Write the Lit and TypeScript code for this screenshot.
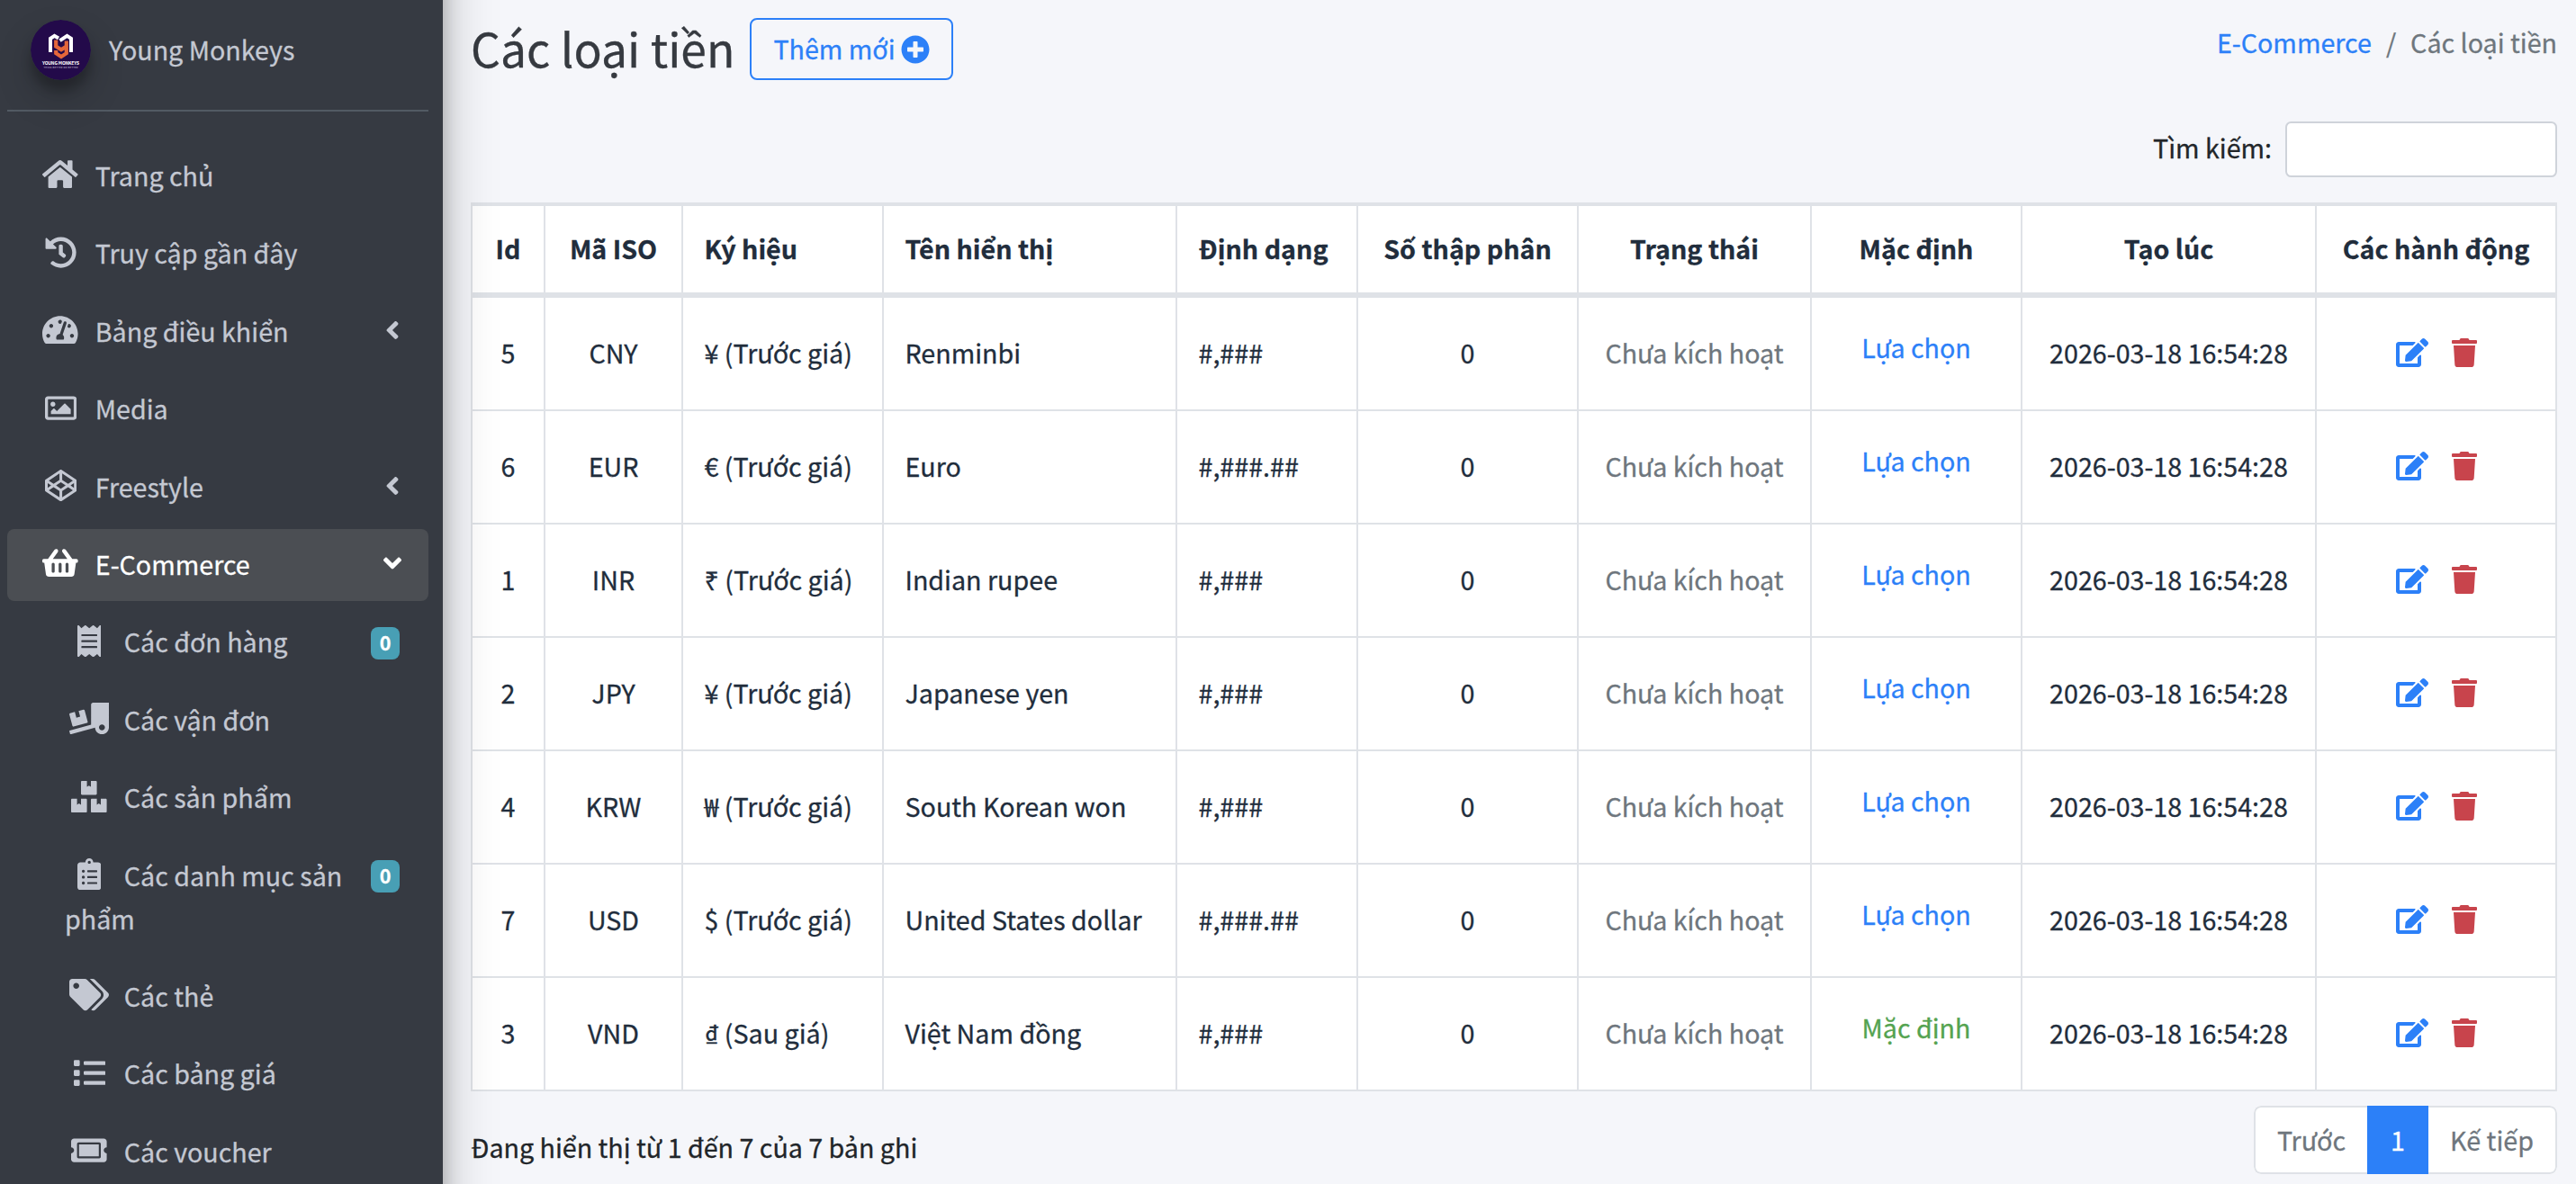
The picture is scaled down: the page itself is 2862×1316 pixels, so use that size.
import { LitElement, html, css, svg } from "lit";
import { customElement, property } from "lit/decorators.js";

interface Icon { w: number; d: string }

const ICONS: Record<string, Icon> = {
  home: { w: 576, d: "M280.37 148.26L96 300.11V464a16 16 0 0 0 16 16l112.06-.29a16 16 0 0 0 15.92-16V368a16 16 0 0 1 16-16h64a16 16 0 0 1 16 16v95.64a16 16 0 0 0 16 16.05L464 480a16 16 0 0 0 16-16V300L295.67 148.26a12.19 12.19 0 0 0-15.3 0zM571.6 251.47L488 182.56V44.05a12 12 0 0 0-12-12h-56a12 12 0 0 0-12 12v72.61L318.47 43a48 48 0 0 0-61 0L4.34 251.47a12 12 0 0 0-1.6 16.9l25.5 31A12 12 0 0 0 45.15 301l235.22-193.74a12.19 12.19 0 0 1 15.3 0L530.9 301a12 12 0 0 0 16.9-1.6l25.5-31a12 12 0 0 0-1.7-16.93z" },
  history: { w: 512, d: "M504 255.531c.253 136.64-111.18 248.372-247.82 248.468-59.015.042-113.223-20.53-155.822-54.911-11.077-8.94-11.905-25.541-1.839-35.607l11.267-11.267c8.609-8.609 22.353-9.551 31.891-1.984C173.062 425.135 212.781 440 256 440c101.705 0 184-82.311 184-184 0-101.705-82.311-184-184-184-48.814 0-93.149 18.969-126.068 49.932l50.754 50.754c10.08 10.08 2.941 27.314-11.313 27.314H24c-8.837 0-16-7.163-16-16V38.627c0-14.254 17.234-21.393 27.314-11.314l49.372 49.372C129.209 34.136 189.552 8 256 8c136.81 0 247.747 110.78 248 247.531zm-180.912 78.784l9.823-12.63c8.138-10.463 6.253-25.542-4.21-33.679L288 256.349V152c0-13.255-10.745-24-24-24h-16c-13.255 0-24 10.745-24 24v135.651l65.409 50.874c10.463 8.137 25.541 6.253 33.679-4.21z" },
  gauge: { w: 576, d: "M288 32C128.94 32 0 160.94 0 320c0 52.8 14.25 102.26 39.06 144.8 5.61 9.62 16.3 15.2 27.44 15.2h443c11.14 0 21.83-5.58 27.44-15.2C561.75 422.26 576 372.8 576 320c0-159.06-128.94-288-288-288zm0 64c14.71 0 26.58 10.13 30.32 23.65-1.11 2.26-2.64 4.23-3.45 6.67l-9.22 27.67c-5.13 3.49-10.97 6.01-17.64 6.01-17.67 0-32-14.33-32-32S270.33 96 288 96zM96 384c-17.67 0-32-14.33-32-32s14.33-32 32-32 32 14.33 32 32-14.33 32-32 32zm48-160c-17.67 0-32-14.33-32-32s14.33-32 32-32 32 14.33 32 32-14.33 32-32 32zm246.77-72.41l-61.33 184C343.13 347.33 352 364.54 352 384c0 11.72-3.38 22.55-8.88 32H232.88c-5.5-9.45-8.88-20.28-8.88-32 0-33.94 26.5-61.43 59.9-63.59l61.34-184.01c4.17-12.56 17.73-19.45 30.36-15.17 12.57 4.19 19.35 17.79 15.17 30.36zm14.66 57.2l15.52-46.55c3.47-1.29 7.13-2.23 11.05-2.23 17.67 0 32 14.33 32 32s-14.33 32-32 32c-11.38-.01-20.89-6.28-26.57-15.22zM480 384c-17.67 0-32-14.33-32-32s14.33-32 32-32 32 14.33 32 32-14.33 32-32 32z" },
  image: { w: 512, d: "M464 64H48C21.49 64 0 85.49 0 112v288c0 26.51 21.49 48 48 48h416c26.51 0 48-21.49 48-48V112c0-26.51-21.49-48-48-48zm-6 336H54a6 6 0 0 1-6-6V118a6 6 0 0 1 6-6h404a6 6 0 0 1 6 6v276a6 6 0 0 1-6 6zM128 152c-22.091 0-40 17.909-40 40s17.909 40 40 40 40-17.909 40-40-17.909-40-40-40zM96 352h320v-80l-87.515-87.515c-4.686-4.686-12.284-4.686-16.971 0L192 304l-39.515-39.515c-4.686-4.686-12.284-4.686-16.971 0L96 304v48z" },
  codepen: { w: 512, d: "M502.285 159.704l-234-156c-7.987-4.915-16.511-4.96-24.571 0l-234 156C3.714 163.703 0 170.847 0 177.989v155.999c0 7.143 3.714 14.286 9.715 18.286l234 156.022c7.987 4.915 16.511 4.96 24.571 0l234-156.022c6-3.999 9.715-11.143 9.715-18.286V177.989c-.001-7.142-3.715-14.286-9.716-18.285zM278 63.131l172.286 114.858-76.857 51.429L278 165.703V63.131zm-44 0v102.572l-95.429 63.715-76.857-51.429L234 63.131zM44 219.132l55.143 36.857L44 292.847v-73.715zm190 229.715L61.714 333.989l76.857-51.429L234 346.275v102.572zm22-140.858l-77.715-52 77.715-52 77.715 52-77.715 52zm22 140.858V346.275l95.429-63.715 76.857 51.429L278 448.847zm190-156l-55.143-36.858L468 219.132v73.715z" },
  basket: { w: 576, d: "M576 216v16c0 13.255-10.745 24-24 24h-8l-26.113 182.788C514.509 462.435 494.257 480 470.37 480H105.63c-23.887 0-44.139-17.565-47.518-41.212L32 256h-8c-13.255 0-24-10.745-24-24v-16c0-13.255 10.745-24 24-24h67.341l106.78-146.821c10.395-14.292 30.407-17.453 44.701-7.058 14.293 10.395 17.453 30.408 7.058 44.701L170.477 192h235.046L326.12 82.821c-10.395-14.292-7.234-34.306 7.059-44.701 14.291-10.395 34.306-7.235 44.701 7.058L484.659 192H552c13.255 0 24 10.745 24 24zM312 392V280c0-13.255-10.745-24-24-24s-24 10.745-24 24v112c0 13.255 10.745 24 24 24s24-10.745 24-24zm112 0V280c0-13.255-10.745-24-24-24s-24 10.745-24 24v112c0 13.255 10.745 24 24 24s24-10.745 24-24zm-224 0V280c0-13.255-10.745-24-24-24s-24 10.745-24 24v112c0 13.255 10.745 24 24 24s24-10.745 24-24z" },
  receipt: { w: 384, d: "M358.4 3.2L320 48 265.6 3.2a15.9 15.9 0 0 0-19.2 0L192 48 137.6 3.2a15.9 15.9 0 0 0-19.2 0L64 48 25.6 3.2C15-4.7 0 2.8 0 16v480c0 13.2 15 20.7 25.6 12.8L64 464l54.4 44.8a15.9 15.9 0 0 0 19.2 0L192 464l54.4 44.8a15.9 15.9 0 0 0 19.2 0L320 464l38.4 44.8c10.5 7.9 25.6.4 25.6-12.8V16c0-13.2-15-20.7-25.6-12.8zM320 360c0 4.4-3.6 8-8 8H72c-4.4 0-8-3.6-8-8v-16c0-4.4 3.6-8 8-8h240c4.4 0 8 3.6 8 8v16zm0-96c0 4.4-3.6 8-8 8H72c-4.4 0-8-3.6-8-8v-16c0-4.4 3.6-8 8-8h240c4.4 0 8 3.6 8 8v16zm0-96c0 4.4-3.6 8-8 8H72c-4.4 0-8-3.6-8-8v-16c0-4.4 3.6-8 8-8h240c4.4 0 8 3.6 8 8v16z" },
  truck: { w: 640, d: "M50.2 375.6c2.3 8.5 11.1 13.6 19.6 11.3l216.4-58c8.5-2.3 13.6-11.1 11.3-19.6l-49.7-185.5c-2.3-8.5-11.1-13.6-19.6-11.3L151 133.3l24.8 92.7-61.8 16.5-24.8-92.7-77.3 20.7C3.4 172.8-1.7 181.6.6 190.1l49.6 185.5zM384 0c-17.7 0-32 14.3-32 32v323.6L5.9 450c-4.3 1.2-6.8 5.6-5.6 9.8l12.6 46.3c1.2 4.3 5.6 6.8 9.8 5.6l393.7-107.4C418.8 464.1 467.6 512 528 512c61.9 0 112-50.1 112-112V0H384zm144 448c-26.5 0-48-21.5-48-48s21.5-48 48-48 48 21.5 48 48-21.5 48-48 48z" },
  boxes: { w: 576, d: "M560 288h-80v96l-32-21.3-32 21.3v-96h-80c-8.8 0-16 7.2-16 16v192c0 8.8 7.2 16 16 16h224c8.8 0 16-7.2 16-16V304c0-8.8-7.2-16-16-16zm-384-64h224c8.8 0 16-7.2 16-16V16c0-8.8-7.2-16-16-16h-80v96l-32-21.3L256 96V0h-80c-8.8 0-16 7.2-16 16v192c0 8.8 7.2 16 16 16zm64 64h-80v96l-32-21.3L96 384v-96H16c-8.8 0-16 7.2-16 16v192c0 8.8 7.2 16 16 16h224c8.8 0 16-7.2 16-16V304c0-8.8-7.2-16-16-16z" },
  clipboard: { w: 384, d: "M336 64h-80c0-35.3-28.7-64-64-64s-64 28.7-64 64H48C21.5 64 0 85.5 0 112v352c0 26.5 21.5 48 48 48h288c26.5 0 48-21.5 48-48V112c0-26.5-21.5-48-48-48zM96 424c-13.3 0-24-10.7-24-24s10.7-24 24-24 24 10.7 24 24-10.7 24-24 24zm0-96c-13.3 0-24-10.7-24-24s10.7-24 24-24 24 10.7 24 24-10.7 24-24 24zm0-96c-13.3 0-24-10.7-24-24s10.7-24 24-24 24 10.7 24 24-10.7 24-24 24zm96-192c13.3 0 24 10.7 24 24s-10.7 24-24 24-24-10.7-24-24 10.7-24 24-24zm128 368c0 4.4-3.6 8-8 8H168c-4.4 0-8-3.6-8-8v-16c0-4.4 3.6-8 8-8h144c4.4 0 8 3.6 8 8v16zm0-96c0 4.4-3.6 8-8 8H168c-4.4 0-8-3.6-8-8v-16c0-4.4 3.6-8 8-8h144c4.4 0 8 3.6 8 8v16zm0-96c0 4.4-3.6 8-8 8H168c-4.4 0-8-3.6-8-8v-16c0-4.4 3.6-8 8-8h144c4.4 0 8 3.6 8 8v16z" },
  tags: { w: 640, d: "M497.941 225.941L286.059 14.059A48 48 0 0 0 252.118 0H48C21.49 0 0 21.49 0 48v204.118a48 48 0 0 0 14.059 33.941l211.882 211.882c18.744 18.745 49.136 18.746 67.882 0l204.118-204.118c18.745-18.745 18.745-49.137 0-67.882zM112 160c-26.51 0-48-21.49-48-48s21.49-48 48-48 48 21.49 48 48-21.49 48-48 48zm513.941 133.823L421.823 497.941c-18.745 18.745-49.137 18.745-67.882 0l-.36-.36L527.64 323.522c16.999-16.999 26.36-39.6 26.36-63.64s-9.362-46.641-26.36-63.64L331.397 0h48.721a48 48 0 0 1 33.941 14.059l211.882 211.882c18.745 18.745 18.745 49.137 0 67.882z" },
  list: { w: 512, d: "M80 368H16a16 16 0 0 0-16 16v64a16 16 0 0 0 16 16h64a16 16 0 0 0 16-16v-64a16 16 0 0 0-16-16zm0-320H16A16 16 0 0 0 0 64v64a16 16 0 0 0 16 16h64a16 16 0 0 0 16-16V64a16 16 0 0 0-16-16zm0 160H16a16 16 0 0 0-16 16v64a16 16 0 0 0 16 16h64a16 16 0 0 0 16-16v-64a16 16 0 0 0-16-16zm416 176H176a16 16 0 0 0-16 16v32a16 16 0 0 0 16 16h320a16 16 0 0 0 16-16v-32a16 16 0 0 0-16-16zm0-320H176a16 16 0 0 0-16 16v32a16 16 0 0 0 16 16h320a16 16 0 0 0 16-16V80a16 16 0 0 0-16-16zm0 160H176a16 16 0 0 0-16 16v32a16 16 0 0 0 16 16h320a16 16 0 0 0 16-16v-32a16 16 0 0 0-16-16z" },
  ticket: { w: 576, d: "M128 160h320v192H128V160zm400 96c0 26.51 21.49 48 48 48v96c0 26.51-21.49 48-48 48H48c-26.51 0-48-21.49-48-48v-96c26.51 0 48-21.49 48-48s-21.49-48-48-48v-96c0-26.51 21.49-48 48-48h480c26.51 0 48 21.49 48 48v96c-26.51 0-48 21.49-48 48zm-48-104c0-13.255-10.745-24-24-24H120c-13.255 0-24 10.745-24 24v208c0 13.255 10.745 24 24 24h336c13.255 0 24-10.745 24-24V152z" },
  plus: { w: 512, d: "M256 8C119 8 8 119 8 256s111 248 248 248 248-111 248-248S393 8 256 8zm144 276c0 6.6-5.4 12-12 12h-92v92c0 6.6-5.4 12-12 12h-56c-6.6 0-12-5.4-12-12v-92h-92c-6.6 0-12-5.4-12-12v-56c0-6.6 5.4-12 12-12h92v-92c0-6.6 5.4-12 12-12h56c6.6 0 12 5.4 12 12v92h92c6.6 0 12 5.4 12 12v56z" },
  edit: { w: 576, d: "M402.6 83.2l90.2 90.2c3.8 3.8 3.8 10 0 13.8L274.4 405.6l-92.8 10.3c-12.4 1.4-22.9-9.1-21.5-21.5l10.3-92.8L388.8 83.2c3.8-3.8 10-3.8 13.8 0zm162-22.9l-48.8-48.8c-15.2-15.2-39.9-15.2-55.2 0l-35.4 35.4c-3.8 3.8-3.8 10 0 13.8l90.2 90.2c3.8 3.8 10 3.8 13.8 0l35.4-35.4c15.2-15.3 15.2-40 0-55.2zM384 346.2V448H64V128h229.8c3.2 0 6.2-1.3 8.5-3.5l40-40c7.6-7.6 2.1-20.5-8.5-20.5H48C21.5 64 0 85.5 0 112v352c0 26.5 21.5 48 48 48h352c26.5 0 48-21.5 48-48V306.2c0-10.7-12.9-16-20.5-8.5l-40 40c-2.2 2.3-3.5 5.3-3.5 8.5z" },
  trash: { w: 448, d: "M432 32H312l-9.4-18.7A24 24 0 0 0 281.1 0H166.8a23.72 23.72 0 0 0-21.4 13.3L136 32H16A16 16 0 0 0 0 48v32a16 16 0 0 0 16 16h416a16 16 0 0 0 16-16V48a16 16 0 0 0-16-16zM53.2 467a48 48 0 0 0 47.9 45h245.8a48 48 0 0 0 47.9-45L416 128H32z" },
  angle: { w: 256, d: "M31.7 239l136-136c9.4-9.4 24.6-9.4 33.9 0l22.6 22.6c9.4 9.4 9.4 24.6 0 33.9L127.9 256l96.4 96.4c9.4 9.4 9.4 24.6 0 33.9L201.7 409c-9.4 9.4-24.6 9.4-33.9 0l-136-136c-9.5-9.4-9.5-24.6-.1-34z" },
};

@customElement("fa-icon")
class FaIcon extends LitElement {
  @property() name = "home";

  static styles = css`
    :host { display: inline-flex; height: 1em; }
    .glyph { display: block; height: 1em; width: auto; fill: currentColor; }
  `;

  render() {
    const i = ICONS[this.name];
    return html`<svg class="glyph" viewBox="0 0 ${i.w} 512">${svg`<path d=${i.d}></path>`}</svg>`;
  }
}

interface NavEntry { icon: string; label: string; arrow?: boolean; open?: boolean; sub?: boolean; badge?: string }

const NAV: NavEntry[] = [
  { icon: "home", label: "Trang chủ" },
  { icon: "history", label: "Truy cập gần đây" },
  { icon: "gauge", label: "Bảng điều khiển", arrow: true },
  { icon: "image", label: "Media" },
  { icon: "codepen", label: "Freestyle", arrow: true },
  { icon: "basket", label: "E-Commerce", arrow: true, open: true },
  { icon: "receipt", label: "Các đơn hàng", sub: true, badge: "0" },
  { icon: "truck", label: "Các vận đơn", sub: true },
  { icon: "boxes", label: "Các sản phẩm", sub: true },
  { icon: "clipboard", label: "Các danh mục sản phẩm", sub: true, badge: "0" },
  { icon: "tags", label: "Các thẻ", sub: true },
  { icon: "list", label: "Các bảng giá", sub: true },
  { icon: "ticket", label: "Các voucher", sub: true },
];

@customElement("app-sidebar")
class AppSidebar extends LitElement {
  /* The box reaches past the window's top and bottom so that its shadow stays even along the whole edge. */
  static styles = css`
    :host {
      display: block; flex: none; width: 492px; height: 1316px; position: relative; z-index: 2;
      margin: -100px 0; padding: 100px 0;
      background: #363a42; color: #c4c8d2;
      box-shadow: 0 28px 56px rgba(0, 0, 0, 0.25), 0 20px 20px rgba(0, 0, 0, 0.22);
    }
    .inner { height: 100%; overflow: hidden; padding: 0 16px 0 8px; box-sizing: border-box; }
    .brand { display: flex; align-items: flex-start; height: 100px; border-bottom: 2px solid #525a63; padding: 22px 0 0 26px; }
    .logo { width: 67px; height: 67px; border-radius: 50%; display: block; box-shadow: 0 20px 40px rgba(0, 0, 0, 0.19), 0 12px 12px rgba(0, 0, 0, 0.23); }
    .brand-name { line-height: 48px; margin: 9px 0 0 20px; }
    .menu { padding-top: 32px; display: flex; flex-direction: column; gap: 6.4px; }
    .item { position: relative; padding: 15px 32px 17px; min-height: 48px; line-height: 48px; border-radius: 8px; }
    .item.sub { padding-left: 64px; }
    .item.sub .text { display: block; width: 352px; }
    .item.open { background: #4b4e53; color: #fff; }
    .icon { display: inline-flex; justify-content: center; width: 51.2px; margin: 0 13px 0 1.6px; font-size: 35.2px; line-height: 0; vertical-align: -4.6px; }
    .arrow { position: absolute; right: 32px; top: 22.4px; font-size: 32px; line-height: 0; }
    .open .arrow { transform: rotate(-90deg); }
    .badge {
      position: absolute; right: 32px; top: 22.4px; width: 32px; height: 36px; border-radius: 8px;
      background: #489fb5; color: #fff; font-weight: 700; font-size: 21.5px; line-height: 34px; text-align: center;
    }
  `;

  render() {
    return html`<div class="inner">
      <div class="brand">
        <svg class="logo" viewBox="0 0 67 67">
          <circle cx="33.5" cy="33.5" r="33.5" fill="#230a4a"></circle>
          <path d="M22 36V20.800l4.500-3 4.500 2.700M45 36V20.800l-4.500-3-8 5.400" fill="none" stroke="#fff" stroke-width="4"></path>
          <path d="M28.200 22.500v7l5.800 3.800 5.800-3.800v-6M39.800 29v8.200l-5.800 3.700-5.800-3.700v-3.200" fill="none" stroke="#e5673a" stroke-width="4.200"></path>
          <text x="33.5" y="49.500" text-anchor="middle" font-size="5" font-weight="700" textLength="41" fill="#fff">YOUNG MONKEYS</text>
          <text x="33.500" y="53.500" text-anchor="middle" font-size="2.600" textLength="38" fill="#cfc8dc">THINK BETTER DO BETTER</text>
        </svg>
        <span class="brand-name">Young Monkeys</span>
      </div>
      <nav class="menu">
        ${NAV.map((n) => html`<div class="item ${n.sub ? "sub" : ""} ${n.open ? "open" : ""}">
          <span class="text"><span class="icon"><fa-icon name=${n.icon}></fa-icon></span>${n.label}</span>
          ${n.arrow ? html`<fa-icon class="arrow" name="angle"></fa-icon>` : ""}
          ${n.badge ? html`<span class="badge">${n.badge}</span>` : ""}
        </div>`)}
      </nav>
    </div>`;
  }
}

const HEADERS = ["Id", "Mã ISO", "Ký hiệu", "Tên hiển thị", "Định dạng", "Số thập phân", "Trạng thái", "Mặc định", "Tạo lúc", "Các hành động"];
const ROWS: string[][] = [
  ["5", "CNY", "¥ (Trước giá)", "Renminbi", "#,###"],
  ["6", "EUR", "€ (Trước giá)", "Euro", "#,###.##"],
  ["1", "INR", "₹ (Trước giá)", "Indian rupee", "#,###"],
  ["2", "JPY", "¥ (Trước giá)", "Japanese yen", "#,###"],
  ["4", "KRW", "₩ (Trước giá)", "South Korean won", "#,###"],
  ["7", "USD", "$ (Trước giá)", "United States dollar", "#,###.##"],
  ["3", "VND", "₫ (Sau giá)", "Việt Nam đồng", "#,###"],
];

@customElement("currency-page")
class CurrencyPage extends LitElement {
  static styles = css`
    :host { display: block; flex: 1; min-width: 0; height: 1316px; overflow: hidden; background: #f5f6fa; color: #212529; }
    .page { padding: 20px 21px 0 31px; display: flex; flex-direction: column; }
    .head { display: flex; justify-content: space-between; height: 115px; }
    .title-box { display: flex; align-items: flex-start; gap: 17px; }
    .title { margin: 0; font-weight: 400; font-size: 51.6px; line-height: 65px; color: #363a40; }
    .add {
      box-sizing: border-box; height: 69px; padding: 0 24px; border: 2px solid #2c80f8; border-radius: 8px;
      display: flex; align-items: center; gap: 6px; color: #2c80f8; font-size: 32px;
    }
    .add-label { font-size: 28.65px; line-height: 48px; margin-top: -2px; }
    .crumbs { display: flex; line-height: 48px; margin-top: 3px; gap: 16px; color: #6e767d; }
    .link { color: #2c80f8; }
    .search { display: flex; justify-content: flex-end; align-items: flex-start; gap: 15px; height: 90px; }
    .search-label { line-height: 48px; margin-top: 5px; }
    .search-input { width: 302px; height: 62px; box-sizing: border-box; border: 2px solid #cfd3da; border-radius: 6.4px; background: #fff; }
    .table { width: 2318px; table-layout: fixed; border-collapse: separate; border-spacing: 0; background: #fff; border-left: 2px solid #dfe2e7; border-top: 4px solid #dfe2e7; color: #212d3c; }
    .c0 { width: 81px; } .c1 { width: 153px; } .c2 { width: 223px; } .c3 { width: 326px; } .c4 { width: 201px; }
    .c5 { width: 245px; } .c6 { width: 259px; } .c7 { width: 234px; } .c8 { width: 327px; } .c9 { width: 267px; }
    .cell { box-sizing: border-box; padding: 37px 0 0; border-right: 2px solid #dfe2e7; border-bottom: 2px solid #dfe2e7; height: 126px; line-height: 48px; text-align: center; white-space: nowrap; vertical-align: top; }
    .cell.left { text-align: left; padding-left: 23.5px; }
    .cell.th { height: 102px; border-bottom-width: 6px; font-weight: 700; padding-top: 23px; }
    .cell.raised { padding-top: 31px; }
    .muted { color: #6e767d; }
    .ok { color: #54a350; }
    .actions { display: flex; justify-content: center; gap: 26px; font-size: 32px; line-height: 0; padding-top: 8px; }
    .del { color: #c8444c; }
    .foot { display: flex; justify-content: space-between; padding-top: 16px; }
    .info { line-height: 48px; margin-top: 22px; }
    .pager { display: flex; box-sizing: border-box; height: 76px; background: #fff; border-radius: 8px; line-height: 72px; color: #6e767d; overflow: hidden; }
    .pg { box-sizing: border-box; border: 2px solid #dfe2e7; text-align: center; }
    .prev { width: 126px; border-right: 0; border-radius: 8px 0 0 8px; }
    .cur { width: 68px; background: #2c80f8; border-color: #2c80f8; color: #fff; }
    .next { width: 143px; border-left: 0; border-radius: 0 8px 8px 0; }
  `;

  private cls(i: number) { return i >= 2 && i <= 4 ? "left" : ""; }

  render() {
    return html`<div class="page">
      <header class="head">
        <div class="title-box">
          <h1 class="title">Các loại tiền</h1>
          <div class="add"><span class="add-label">Thêm mới</span><fa-icon name="plus"></fa-icon></div>
        </div>
        <div class="crumbs"><span class="link">E-Commerce</span><span>/</span><span>Các loại tiền</span></div>
      </header>
      <div class="search"><span class="search-label">Tìm kiếm:</span><div class="search-input"></div></div>
      <table class="table">
        <colgroup>${HEADERS.map((_, i) => html`<col class="c${i}">`)}</colgroup>
        <thead><tr>${HEADERS.map((h, i) => html`<th class="cell th ${this.cls(i)}">${h}</th>`)}</tr></thead>
        <tbody>
          ${ROWS.map((r) => html`<tr>
            ${r.map((c, i) => html`<td class="cell ${this.cls(i)}">${c}</td>`)}
            <td class="cell">0</td>
            <td class="cell muted">Chưa kích hoạt</td>
            <td class="cell raised">${r[1] === "VND" ? html`<span class="ok">Mặc định</span>` : html`<span class="link">Lựa chọn</span>`}</td>
            <td class="cell">2026-03-18 16:54:28</td>
            <td class="cell"><div class="actions"><fa-icon class="link" name="edit"></fa-icon><fa-icon class="del" name="trash"></fa-icon></div></td>
          </tr>`)}
        </tbody>
      </table>
      <footer class="foot">
        <span class="info">Đang hiển thị từ 1 đến 7 của 7 bản ghi</span>
        <div class="pager"><span class="pg prev">Trước</span><span class="pg cur">1</span><span class="pg next">Kế tiếp</span></div>
      </footer>
    </div>`;
  }
}

@customElement("app-root")
class AppRoot extends LitElement {
  static styles = css`
    :host {
      display: flex; align-items: flex-start; width: 2862px; height: 1316px; overflow: hidden;
      font-family: "Noto Sans CJK SC", "Noto Sans", sans-serif; font-size: 28.65px;
      -webkit-text-stroke: 0.3px currentColor;
    }
  `;

  render() {
    return html`<app-sidebar></app-sidebar><currency-page></currency-page>`;
  }
}
